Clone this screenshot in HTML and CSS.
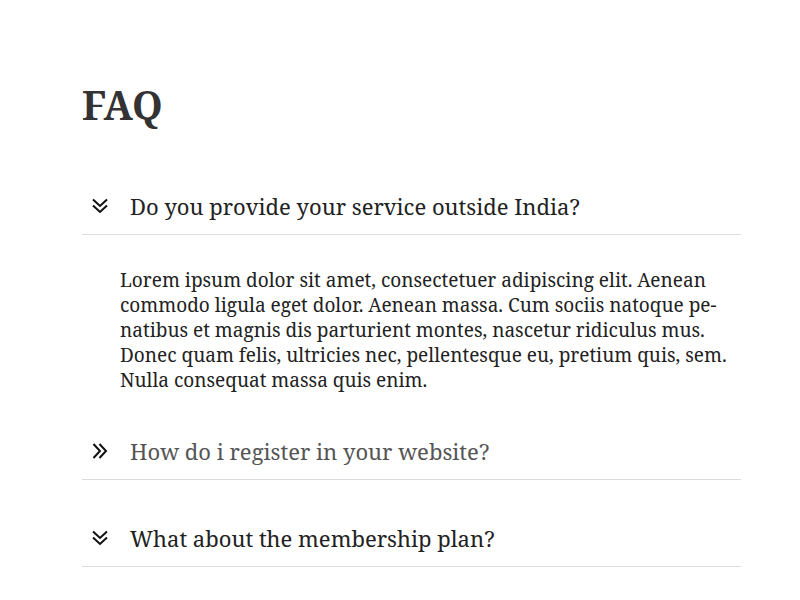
FILE: index.html
```html
<!DOCTYPE html>
<html lang="en">
<head>
<meta charset="utf-8">
<title>FAQ</title>
<link rel="stylesheet" href="styles.css">
</head>
<body>
<main class="faq">
  <h1 class="faq-title">FAQ</h1>
  <section class="item open">
    <div class="q">
      <svg class="ico" viewBox="0 0 16 16"><path d="M1 1.5l7 6.5 7-6.5M1 7.5l7 6.5 7-6.5"/></svg>
      <span class="q-text">Do you provide your service outside India?</span>
    </div>
    <div class="a">
      <p>Lorem ipsum dolor sit amet, consectetuer adipiscing elit. Aenean commodo ligula eget dolor. Aenean massa. Cum sociis natoque pe&shy;natibus et magnis dis parturient montes, nascetur ridiculus mus. Donec quam felis, ultricies nec, pellentesque eu, pretium quis, sem. Nulla consequat massa quis enim.</p>
    </div>
  </section>
  <section class="item muted">
    <div class="q">
      <svg class="ico" viewBox="0 0 16 16"><path d="M1.5 1l6.5 7-6.5 7M7.5 1l6.5 7-6.5 7"/></svg>
      <span class="q-text">How do i register in your website?</span>
    </div>
  </section>
  <section class="item">
    <div class="q">
      <svg class="ico" viewBox="0 0 16 16"><path d="M1 1.5l7 6.5 7-6.5M1 7.5l7 6.5 7-6.5"/></svg>
      <span class="q-text">What about the membership plan?</span>
    </div>
  </section>
</main>
</body>
</html>
```

FILE: styles.css
```css
html, body {
  margin: 0;
  padding: 0;
  background: #fff;
}
body {
  font-family: "Noto Serif", "Droid Serif", "DejaVu Serif", serif;
  color: #222;
}
.faq {
  width: 659px;
  margin-left: 82px;
  padding-top: 78px;
}
.faq-title {
  margin: 0 0 50px;
  font-size: 39px;
  line-height: 54px;
  font-weight: 700;
  color: #333;
}
.item {
  margin-bottom: 34px;
}
.q {
  display: flex;
  align-items: center;
  gap: 22px;
  padding: 11px 0 15px 10px;
  border-bottom: 1px solid #dcdcdc;
  font-size: 22px;
  line-height: 26px;
  color: #222;
}
.ico {
  width: 16px;
  height: 16px;
  flex: none;
  fill: none;
  stroke: #111;
  stroke-width: 2;
}
.muted .q-text {
  color: #555;
}
.a {
  padding: 33px 0 0 38px;
}
.a p {
  margin: 0;
  font-size: 19px;
  line-height: 25px;
  color: #222;
}
```
